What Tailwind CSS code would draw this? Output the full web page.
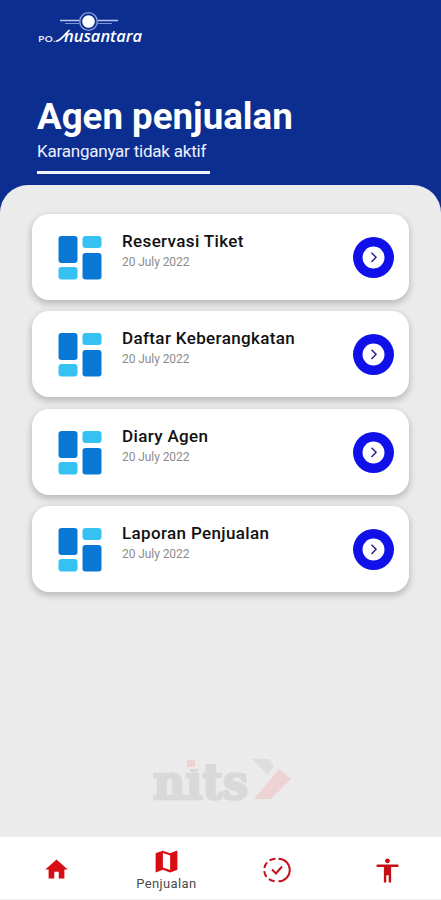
<!DOCTYPE html>
<html lang="id">
<head>
<meta charset="utf-8">
<title>Agen penjualan</title>
<script src="https://cdn.jsdelivr.net/npm/@tailwindcss/browser@4"></script>
</head>
<body class="bg-[#0c2e91] font-[Roboto,sans-serif]">
<svg class="hidden">
  <symbol id="dash" viewBox="0 0 44 44">
    <rect x="0.5" y="0" width="19" height="27" rx="3" fill="#0878d4"/>
    <rect x="24.500" y="0" width="19" height="12" rx="3" fill="#35c1f1"/>
    <rect x="0.5" y="31" width="19" height="12.500" rx="3" fill="#35c1f1"/>
    <rect x="24.500" y="17" width="19" height="26.500" rx="3" fill="#0878d4"/>
  </symbol>
  <symbol id="go" viewBox="0 0 40 40">
    <circle cx="20" cy="20" r="20" fill="#1010e8"/>
    <circle cx="20" cy="20" r="10.700" fill="#fff"/>
    <path d="M18 15.300l4.500 4.500-4.500 4.500" fill="none" stroke="#2c1c86" stroke-width="1.400"/>
  </symbol>
</svg>
<div class="flex h-[900px] w-[441px] flex-col overflow-hidden">
  <header class="h-[185px] shrink-0 pl-[37px]">
    <div class="h-[63px] w-[130px] pt-[8px]">
      <svg width="108" height="42" viewBox="37 8 108 42" fill="none">
        <path d="M60 20.500H79M98 20.500H118" stroke="#b9c6f0" stroke-width="1.500"/>
        <path d="M65 23.500H79M98 23.500H112" stroke="#7f93d6" stroke-width="1.200"/>
        <circle cx="88.500" cy="21.500" r="8.800" stroke="#8fa3e0" stroke-width="1.300"/>
        <circle cx="88.500" cy="21.500" r="6.300" fill="#fff"/>
        <text x="38" y="42" fill="#e6ebff" font-family="Open Sans, sans-serif" font-size="9.500" font-weight="600" textLength="18" lengthAdjust="spacingAndGlyphs">PO.</text>
        <path d="M57 41C60 41 64 36 69 30.500" stroke="#fff" stroke-width="1.800" stroke-linecap="round"/>
        <text x="64" y="42" fill="#fff" font-family="Open Sans, sans-serif" font-size="15.500" font-style="italic" font-weight="600" textLength="78" lengthAdjust="spacingAndGlyphs">nusantara</text>
      </svg>
    </div>
    <h1 class="mt-[32px] text-[36.700px] leading-[44px] font-bold whitespace-nowrap text-white">Agen penjualan</h1>
    <p class="mt-[2px] text-[17px] leading-[20px] tracking-[-0.220px] whitespace-nowrap text-[#edf1ff]">Karanganyar tidak aktif</p>
    <div class="mt-[10px] h-[3px] w-[173px] bg-[#f3f5ff]"></div>
  </header>
  <main class="flex flex-1 flex-col rounded-t-[28px] bg-[#ebebeb] pt-[28.500px]">
    <div class="flex h-[386px] flex-col gap-[11.670px] overflow-visible pr-[32px] pl-[32px]">
      <section class="flex h-[86px] w-[377px] shrink-0 rounded-[17px] bg-white pt-[22px] pr-[15px] pl-[26px] shadow-[0_3px_6px_1px_rgba(0,0,0,0.2)]">
        <svg class="size-[44px]"><use href="#dash"/></svg>
        <div class="-mt-[5px] ml-[20px] flex-1 whitespace-nowrap"><h2 class="text-[17px] leading-[21px] font-medium tracking-[0.360px] text-[#111]">Reservasi Tiket</h2><p class="text-[12px] leading-[20px] tracking-[-0.080px] text-[#8c8c8c]">20 July 2022</p></div>
        <svg class="mt-px size-[41px]"><use href="#go"/></svg>
      </section>
      <section class="flex h-[86px] w-[377px] shrink-0 rounded-[17px] bg-white pt-[22px] pr-[15px] pl-[26px] shadow-[0_3px_6px_1px_rgba(0,0,0,0.2)]">
        <svg class="size-[44px]"><use href="#dash"/></svg>
        <div class="-mt-[5px] ml-[20px] flex-1 whitespace-nowrap"><h2 class="text-[17px] leading-[21px] font-medium tracking-[0.360px] text-[#111]">Daftar Keberangkatan</h2><p class="text-[12px] leading-[20px] tracking-[-0.080px] text-[#8c8c8c]">20 July 2022</p></div>
        <svg class="mt-px size-[41px]"><use href="#go"/></svg>
      </section>
      <section class="flex h-[86px] w-[377px] shrink-0 rounded-[17px] bg-white pt-[22px] pr-[15px] pl-[26px] shadow-[0_3px_6px_1px_rgba(0,0,0,0.2)]">
        <svg class="size-[44px]"><use href="#dash"/></svg>
        <div class="-mt-[5px] ml-[20px] flex-1 whitespace-nowrap"><h2 class="text-[17px] leading-[21px] font-medium tracking-[0.360px] text-[#111]">Diary Agen</h2><p class="text-[12px] leading-[20px] tracking-[-0.080px] text-[#8c8c8c]">20 July 2022</p></div>
        <svg class="mt-px size-[41px]"><use href="#go"/></svg>
      </section>
      <section class="flex h-[86px] w-[377px] shrink-0 rounded-[17px] bg-white pt-[22px] pr-[15px] pl-[26px] shadow-[0_3px_6px_1px_rgba(0,0,0,0.2)]">
        <svg class="size-[44px]"><use href="#dash"/></svg>
        <div class="-mt-[5px] ml-[20px] flex-1 whitespace-nowrap"><h2 class="text-[17px] leading-[21px] font-medium tracking-[0.360px] text-[#111]">Laporan Penjualan</h2><p class="text-[12px] leading-[20px] tracking-[-0.080px] text-[#8c8c8c]">20 July 2022</p></div>
        <svg class="mt-px size-[41px]"><use href="#go"/></svg>
      </section>
    </div>
    <svg class="mt-[150.500px] ml-[150px]" width="145" height="60" viewBox="150 750 145 60">
      <text x="153" y="799" fill="#d9d9d9" stroke="#d9d9d9" stroke-width="2.500" font-family="DejaVu Serif, serif" font-size="48" font-weight="bold" textLength="95" lengthAdjust="spacingAndGlyphs">nits</text>
      <rect x="182" y="756" width="17" height="13" fill="#ebebeb"/>
      <rect x="187" y="760" width="8" height="7" fill="#edd3d3"/>
      <path d="M252 759H269L274 765 268 775Z" fill="#dedede"/>
      <path d="M279 769L291 779 271 799H254Z" fill="#edd3d4"/>
    </svg>
  </main>
  <nav class="grid h-[63px] shrink-0 grid-cols-4 border-b border-[#eeeeee] bg-white">
    <div class="flex justify-center pt-[19px] pl-[2px] text-[#d80d12]">
      <svg width="27" height="27" viewBox="0 0 24 24" fill="currentColor"><path d="M10 20v-6h4v6h5v-8h3L12 3 2 12h3v8z"/></svg>
    </div>
    <div class="flex flex-col items-center pt-[10px] pl-[2px] text-[#d80d12]">
      <svg width="29" height="29" viewBox="0 0 24 24" fill="currentColor"><path d="M20.500 3l-.16.03L15 5.100 9 3 3.360 4.900c-.21.07-.36.25-.36.48V20.500c0 .28.22.5.5.5l.16-.03L9 18.900l6 2.100 5.640-1.900c.21-.07.36-.25.36-.48V3.500c0-.28-.22-.5-.5-.5zM15 19l-6-2.110V5l6 2.110V19z"/></svg>
      <span class="-mt-[1px] text-[13px] leading-[18px] tracking-[0.360px] text-[#4b4b4b]">Penjualan</span>
    </div>
    <div class="flex justify-center pt-[18px] pl-[2px] text-[#c5141c]">
      <svg width="30" height="30" viewBox="0 0 30 30" fill="none" stroke="currentColor" stroke-width="2"><path d="M16.500 3.700A11.300 11.300 0 0 1 16.500 26.300"/><path d="M13.500 3.700A11.300 11.300 0 0 0 13.500 26.300" stroke-dasharray="6.200 3.200"/><path d="M10 14.500l4 4 6-7"/></svg>
    </div>
    <div class="flex justify-center pt-[18.500px] pl-[3px] text-[#c60f15]">
      <svg width="29" height="29" viewBox="0 0 24 24" fill="currentColor"><path d="M12 2c1.100 0 2 .9 2 2s-.9 2-2 2-2-.9-2-2 .9-2 2-2zm9 7h-6v13h-2v-6h-2v6H9V9H3V7h18v2z"/></svg>
    </div>
  </nav>
</div>
</body>
</html>
